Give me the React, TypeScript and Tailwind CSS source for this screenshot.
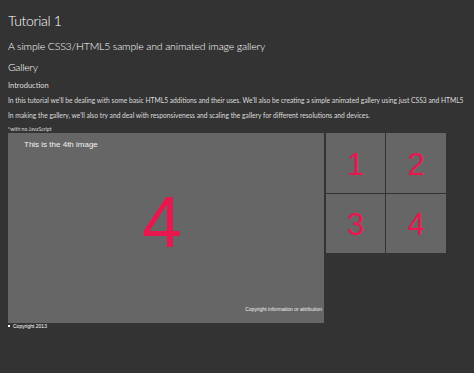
const thumbs = ["1", "2", "3", "4"];

export default function App() {
  return (
    <div className="min-h-[373px] w-full bg-[#333333] pl-[8px] text-white font-['Lato',sans-serif]">
      <h1 className="pt-[11px] text-[14px] leading-[20px] tracking-[-0.3px] font-light">Tutorial 1</h1>
      <h2 className="mt-[8px] text-[10.5px] leading-[14px] tracking-[-0.15px] font-light">
        A simple CSS3/HTML5 sample and animated image gallery
      </h2>
      <h3 className="mt-[7px] text-[10.5px] leading-[14px] tracking-[-0.3px] font-light">Gallery</h3>
      <h4 className="mt-[7px] text-[7.5px] leading-[10px] text-[#dddddd]">Introduction</h4>
      <p className="mt-[5px] text-[6.7px] leading-[8px] whitespace-nowrap text-[#dddddd]">
        In this tutorial we'll be dealing with some basic HTML5 additions and their uses. We'll also be creating a
        simple animated gallery using just CSS3 and HTML5
      </p>
      <p className="mt-[7px] text-[6.7px] leading-[8px] whitespace-nowrap text-[#dddddd]">
        In making the gallery, we'll also try and deal with responsiveness and scaling the gallery for different
        resolutions and devices.
      </p>
      <p className="mt-[7px] text-[5.2px] leading-[6px] text-[#dddddd]">*with no JavaScript</p>

      <div className="mt-[1px] flex gap-[2px]">
        <div className="flex h-[190px] w-[316px] flex-col bg-[#666666] font-['Liberation_Sans',Arial,sans-serif]">
          <div className="pl-[16px] pt-[7px] text-[8px] leading-[10px] text-[#f2f2f2]">This is the 4th image</div>
          <div className="flex flex-1 items-center justify-center pb-[12px] pr-[8px]">
            <span className="text-[72px] leading-[72px] text-[#e8184f]">4</span>
          </div>
          <div className="pb-[11px] pr-[2px] text-right text-[5px] leading-[6px] text-[#eeeeee]">
            Copyright information or attribution
          </div>
        </div>
        <div className="grid h-[120px] grid-cols-[59px_60px] grid-rows-[60px_59px] gap-[1px] font-['Liberation_Sans',Arial,sans-serif]">
          {thumbs.map((n) => (
            <div key={n} className="flex items-center justify-center bg-[#666666] pt-[2px]">
              <span className="text-[31px] leading-[31px] text-[#e8184f]">{n}</span>
            </div>
          ))}
        </div>
      </div>

      <div className="flex items-center gap-[3px] font-['Liberation_Sans',Arial,sans-serif] text-[5px] leading-[6px]">
        <span className="h-[2px] w-[2px] bg-white" />
        <span>Copyright 2013</span>
      </div>
    </div>
  );
}
